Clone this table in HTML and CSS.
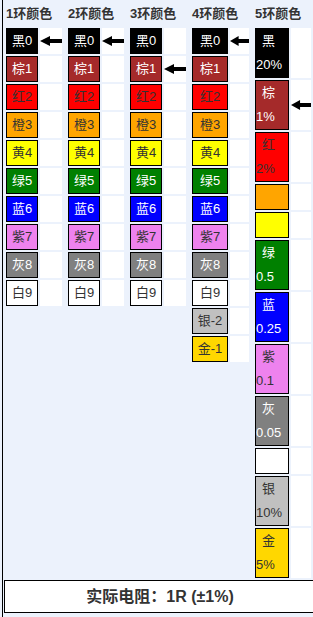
FILE: index.html
```html
<!DOCTYPE html>
<html>
<head>
<meta charset="utf-8">
<link rel="stylesheet" href="styles.css">
</head>
<body>
<div class="page">
  <div class="cols">
    <div class="col">
      <div class="hd">1环颜色</div>
      <div class="row"><div class="sw c-black">黑0</div><div class="ar"><svg viewBox="0 0 22 10" preserveAspectRatio="none"><polygon points="0,5 10,0 10,10"/><rect x="9" y="3" width="13" height="4"/></svg></div></div>
      <div class="row"><div class="sw c-brown">棕1</div><div class="ar"></div></div>
      <div class="row"><div class="sw c-red">红2</div><div class="ar"></div></div>
      <div class="row"><div class="sw c-orange">橙3</div><div class="ar"></div></div>
      <div class="row"><div class="sw c-yellow">黄4</div><div class="ar"></div></div>
      <div class="row"><div class="sw c-green">绿5</div><div class="ar"></div></div>
      <div class="row"><div class="sw c-blue">蓝6</div><div class="ar"></div></div>
      <div class="row"><div class="sw c-violet">紫7</div><div class="ar"></div></div>
      <div class="row"><div class="sw c-gray">灰8</div><div class="ar"></div></div>
      <div class="row"><div class="sw c-white">白9</div><div class="ar"></div></div>
    </div>
    <div class="col">
      <div class="hd">2环颜色</div>
      <div class="row"><div class="sw c-black">黑0</div><div class="ar"><svg viewBox="0 0 22 10" preserveAspectRatio="none"><polygon points="0,5 10,0 10,10"/><rect x="9" y="3" width="13" height="4"/></svg></div></div>
      <div class="row"><div class="sw c-brown">棕1</div><div class="ar"></div></div>
      <div class="row"><div class="sw c-red">红2</div><div class="ar"></div></div>
      <div class="row"><div class="sw c-orange">橙3</div><div class="ar"></div></div>
      <div class="row"><div class="sw c-yellow">黄4</div><div class="ar"></div></div>
      <div class="row"><div class="sw c-green">绿5</div><div class="ar"></div></div>
      <div class="row"><div class="sw c-blue">蓝6</div><div class="ar"></div></div>
      <div class="row"><div class="sw c-violet">紫7</div><div class="ar"></div></div>
      <div class="row"><div class="sw c-gray">灰8</div><div class="ar"></div></div>
      <div class="row"><div class="sw c-white">白9</div><div class="ar"></div></div>
    </div>
    <div class="col">
      <div class="hd">3环颜色</div>
      <div class="row"><div class="sw c-black">黑0</div><div class="ar"></div></div>
      <div class="row"><div class="sw c-brown">棕1</div><div class="ar"><svg viewBox="0 0 22 10" preserveAspectRatio="none"><polygon points="0,5 10,0 10,10"/><rect x="9" y="3" width="13" height="4"/></svg></div></div>
      <div class="row"><div class="sw c-red">红2</div><div class="ar"></div></div>
      <div class="row"><div class="sw c-orange">橙3</div><div class="ar"></div></div>
      <div class="row"><div class="sw c-yellow">黄4</div><div class="ar"></div></div>
      <div class="row"><div class="sw c-green">绿5</div><div class="ar"></div></div>
      <div class="row"><div class="sw c-blue">蓝6</div><div class="ar"></div></div>
      <div class="row"><div class="sw c-violet">紫7</div><div class="ar"></div></div>
      <div class="row"><div class="sw c-gray">灰8</div><div class="ar"></div></div>
      <div class="row"><div class="sw c-white">白9</div><div class="ar"></div></div>
    </div>
    <div class="col col4">
      <div class="hd">4环颜色</div>
      <div class="row"><div class="sw c-black">黑0</div><div class="ar"><svg viewBox="0 0 22 10" preserveAspectRatio="none"><polygon points="0,5 10,0 10,10"/><rect x="9" y="3" width="13" height="4"/></svg></div></div>
      <div class="row"><div class="sw c-brown">棕1</div><div class="ar"></div></div>
      <div class="row"><div class="sw c-red">红2</div><div class="ar"></div></div>
      <div class="row"><div class="sw c-orange">橙3</div><div class="ar"></div></div>
      <div class="row"><div class="sw c-yellow">黄4</div><div class="ar"></div></div>
      <div class="row"><div class="sw c-green">绿5</div><div class="ar"></div></div>
      <div class="row"><div class="sw c-blue">蓝6</div><div class="ar"></div></div>
      <div class="row"><div class="sw c-violet">紫7</div><div class="ar"></div></div>
      <div class="row"><div class="sw c-gray">灰8</div><div class="ar"></div></div>
      <div class="row"><div class="sw c-white">白9</div><div class="ar"></div></div>
      <div class="row"><div class="sw c-silver">银-2</div><div class="ar"></div></div>
      <div class="row"><div class="sw c-gold">金-1</div><div class="ar"></div></div>
    </div>
    <div class="col col5">
      <div class="hd">5环颜色</div>
      <div class="row"><div class="sw c-black"><div class="nm">黑</div><div class="vl">20%</div></div><div class="ar"></div></div>
      <div class="row"><div class="sw c-brown"><div class="nm">棕</div><div class="vl">1%</div></div><div class="ar"><svg viewBox="0 0 22 10" preserveAspectRatio="none"><polygon points="0,5 10,0 10,10"/><rect x="9" y="3" width="13" height="4"/></svg></div></div>
      <div class="row"><div class="sw c-red"><div class="nm">红</div><div class="vl">2%</div></div><div class="ar"></div></div>
      <div class="row"><div class="sw c-orange"><div class="nm"></div></div><div class="ar"></div></div>
      <div class="row"><div class="sw c-yellow"><div class="nm"></div></div><div class="ar"></div></div>
      <div class="row"><div class="sw c-green"><div class="nm">绿</div><div class="vl">0.5</div></div><div class="ar"></div></div>
      <div class="row"><div class="sw c-blue"><div class="nm">蓝</div><div class="vl">0.25</div></div><div class="ar"></div></div>
      <div class="row"><div class="sw c-violet"><div class="nm">紫</div><div class="vl">0.1</div></div><div class="ar"></div></div>
      <div class="row"><div class="sw c-gray"><div class="nm">灰</div><div class="vl">0.05</div></div><div class="ar"></div></div>
      <div class="row"><div class="sw c-white"><div class="nm"></div></div><div class="ar"></div></div>
      <div class="row"><div class="sw c-silver"><div class="nm">银</div><div class="vl">10%</div></div><div class="ar"></div></div>
      <div class="row"><div class="sw c-gold"><div class="nm">金</div><div class="vl">5%</div></div><div class="ar"></div></div>
    </div>
  </div>
  <div class="result">实际电阻：1R (±1%)</div>
</div>
</body>
</html>
```
FILE: styles.css
```css
html, body {
  margin: 0;
  padding: 0;
  background: #ecf2fc;
}
body {
  font-family: "Liberation Sans", "Noto Sans CJK SC", sans-serif;
  color: #333;
  overflow: hidden;
}
.page {
  margin-left: 2px;
  border-left: 1px solid #000;
  height: 617px;
  box-sizing: border-box;
  width: 311px;
  overflow: hidden;
}
.cols {
  display: flex;
  align-items: flex-start;
  gap: 6px;
  padding-left: 3px;
}
.col {
  display: flex;
  flex-direction: column;
  gap: 2px;
}
.hd {
  height: 26px;
  line-height: 28px;
  font-size: 13px;
  font-weight: bold;
  color: #333;
  white-space: nowrap;
}
.row {
  display: flex;
  gap: 2px;
}
.sw {
  width: 32px;
  height: 26px;
  box-sizing: border-box;
  border: 1px solid #000;
  font-size: 13px;
  line-height: 24px;
  text-align: center;
  white-space: nowrap;
}
.ar {
  width: 22px;
  background: #fff;
  display: flex;
  align-items: center;
}
.ar svg {
  width: 100%;
  height: 10px;
  display: block;
  fill: #000;
}
.col4 .sw { width: 36px; }
.col4 .ar { width: 19px; }
.col5 .sw {
  width: 34px;
  height: auto;
  text-align: left;
}
.col5 .ar { width: 20px; }
.nm {
  height: 24px;
  line-height: 24px;
  padding-left: 6px;
}
.vl {
  height: 24px;
  line-height: 24px;
}
.c-black { background: #000; color: #fff; }
.c-brown { background: #a52a2a; color: #fff; }
.c-red { background: #f00; color: #333; }
.c-orange { background: #ffa500; color: #333; }
.c-yellow { background: #ff0; color: #333; }
.c-green { background: #008000; color: #fff; }
.c-blue { background: #00f; color: #fff; }
.c-violet { background: #ee82ee; color: #333; }
.c-gray { background: #808080; color: #fff; }
.c-white { background: #fff; color: #333; }
.c-silver { background: #c0c0c0; color: #333; }
.c-gold { background: #ffd700; color: #333; }
.result {
  margin-top: 2px;
  margin-left: 1px;
  width: 312px;
  height: 33px;
  box-sizing: border-box;
  border: 1px solid #000;
  background: #fff;
  text-align: center;
  font-size: 16px;
  font-weight: bold;
  line-height: 31px;
  color: #333;
}
```
